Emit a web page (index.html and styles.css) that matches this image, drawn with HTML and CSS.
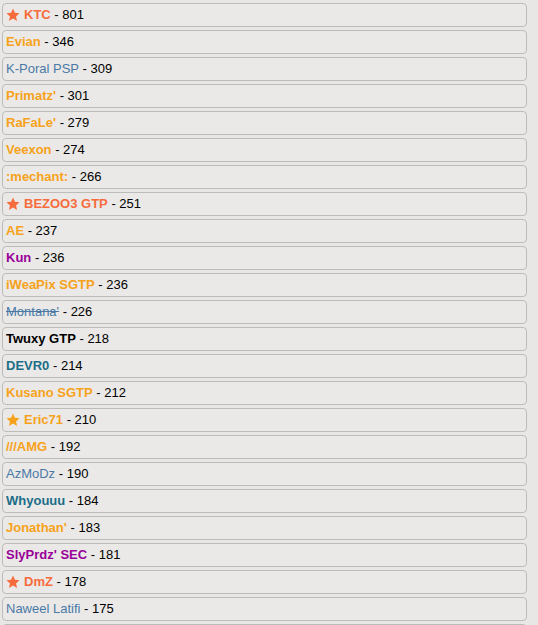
FILE: index.html
```html
<!DOCTYPE html>
<html lang="en">
<head>
    <meta charset="UTF-8">
    <meta name="viewport" content="width=device-width, initial-scale=1.0">
    <title>Classement</title>
    <link rel="stylesheet" href="styles.css">
</head>
<body>
    <div class="ranking">
        <div class="row"><span class="star"><svg viewBox="0 0 24 24"><path d="M12 1l3.3 7.3 7.9.8-6 5.3 1.8 7.8L12 18.2 5 22.2l1.8-7.8-6-5.3 7.9-.8z"/></svg></span><span class="name fav">KTC</span> - 801</div>
        <div class="row"><span class="name orange">Evian</span> - 346</div>
        <div class="row"><span class="name blue">K-Poral PSP</span> - 309</div>
        <div class="row"><span class="name orange">Primatz'</span> - 301</div>
        <div class="row"><span class="name orange">RaFaLe'</span> - 279</div>
        <div class="row"><span class="name orange">Veexon</span> - 274</div>
        <div class="row"><span class="name orange">:mechant:</span> - 266</div>
        <div class="row"><span class="star"><svg viewBox="0 0 24 24"><path d="M12 1l3.3 7.3 7.9.8-6 5.3 1.8 7.8L12 18.2 5 22.2l1.8-7.8-6-5.3 7.9-.8z"/></svg></span><span class="name fav">BEZOO3 GTP</span> - 251</div>
        <div class="row"><span class="name orange">AE</span> - 237</div>
        <div class="row"><span class="name purple">Kun</span> - 236</div>
        <div class="row"><span class="name orange">iWeaPix SGTP</span> - 236</div>
        <div class="row"><span class="name blue banned">Montana'</span> - 226</div>
        <div class="row"><span class="name black">Twuxy GTP</span> - 218</div>
        <div class="row"><span class="name teal">DEVR0</span> - 214</div>
        <div class="row"><span class="name orange">Kusano SGTP</span> - 212</div>
        <div class="row"><span class="star gold"><svg viewBox="0 0 24 24"><path d="M12 1l3.3 7.3 7.9.8-6 5.3 1.8 7.8L12 18.2 5 22.2l1.8-7.8-6-5.3 7.9-.8z"/></svg></span><span class="name orange">Eric71</span> - 210</div>
        <div class="row"><span class="name orange">///AMG</span> - 192</div>
        <div class="row"><span class="name blue">AzMoDz</span> - 190</div>
        <div class="row"><span class="name teal">Whyouuu</span> - 184</div>
        <div class="row"><span class="name orange">Jonathan'</span> - 183</div>
        <div class="row"><span class="name purple">SlyPrdz' SEC</span> - 181</div>
        <div class="row"><span class="star"><svg viewBox="0 0 24 24"><path d="M12 1l3.3 7.3 7.9.8-6 5.3 1.8 7.8L12 18.2 5 22.2l1.8-7.8-6-5.3 7.9-.8z"/></svg></span><span class="name fav">DmZ</span> - 178</div>
        <div class="row"><span class="name blue">Naweel Latifi</span> - 175</div>
        <div class="row"></div>
    </div>
</body>
</html>
```

FILE: styles.css
```css
body {
    margin: 0;
    background: #e8e7e5;
    font-family: "Liberation Sans", Arial, sans-serif;
    font-size: 13px;
    color: #000;
    overflow: hidden;
}
.ranking {
    padding: 3px 0 0 2px;
    width: 525px;
}
.row {
    display: flex;
    align-items: center;
    height: 22px;
    line-height: 22px;
    padding-left: 3px;
    margin-bottom: 3px;
    border: 1px solid #bcbcbb;
    border-radius: 4px;
    background: #eae9e7;
    white-space: pre;
}
.star {
    display: inline-flex;
    width: 14px;
    height: 14px;
    margin-right: 4px;
}
.star svg {
    width: 14px;
    height: 14px;
    fill: #f76c3c;
}
.star.gold svg {
    fill: #f7a21b;
}
.name {
    font-weight: bold;
}
.fav {
    color: #f76c3c;
}
.orange {
    color: #f7a21b;
}
.blue {
    color: #4b79a6;
    font-weight: normal;
}
.banned {
    text-decoration: line-through;
}
.teal {
    color: #1c6d87;
}
.purple {
    color: #990099;
}
.black {
    color: #000;
}
```
